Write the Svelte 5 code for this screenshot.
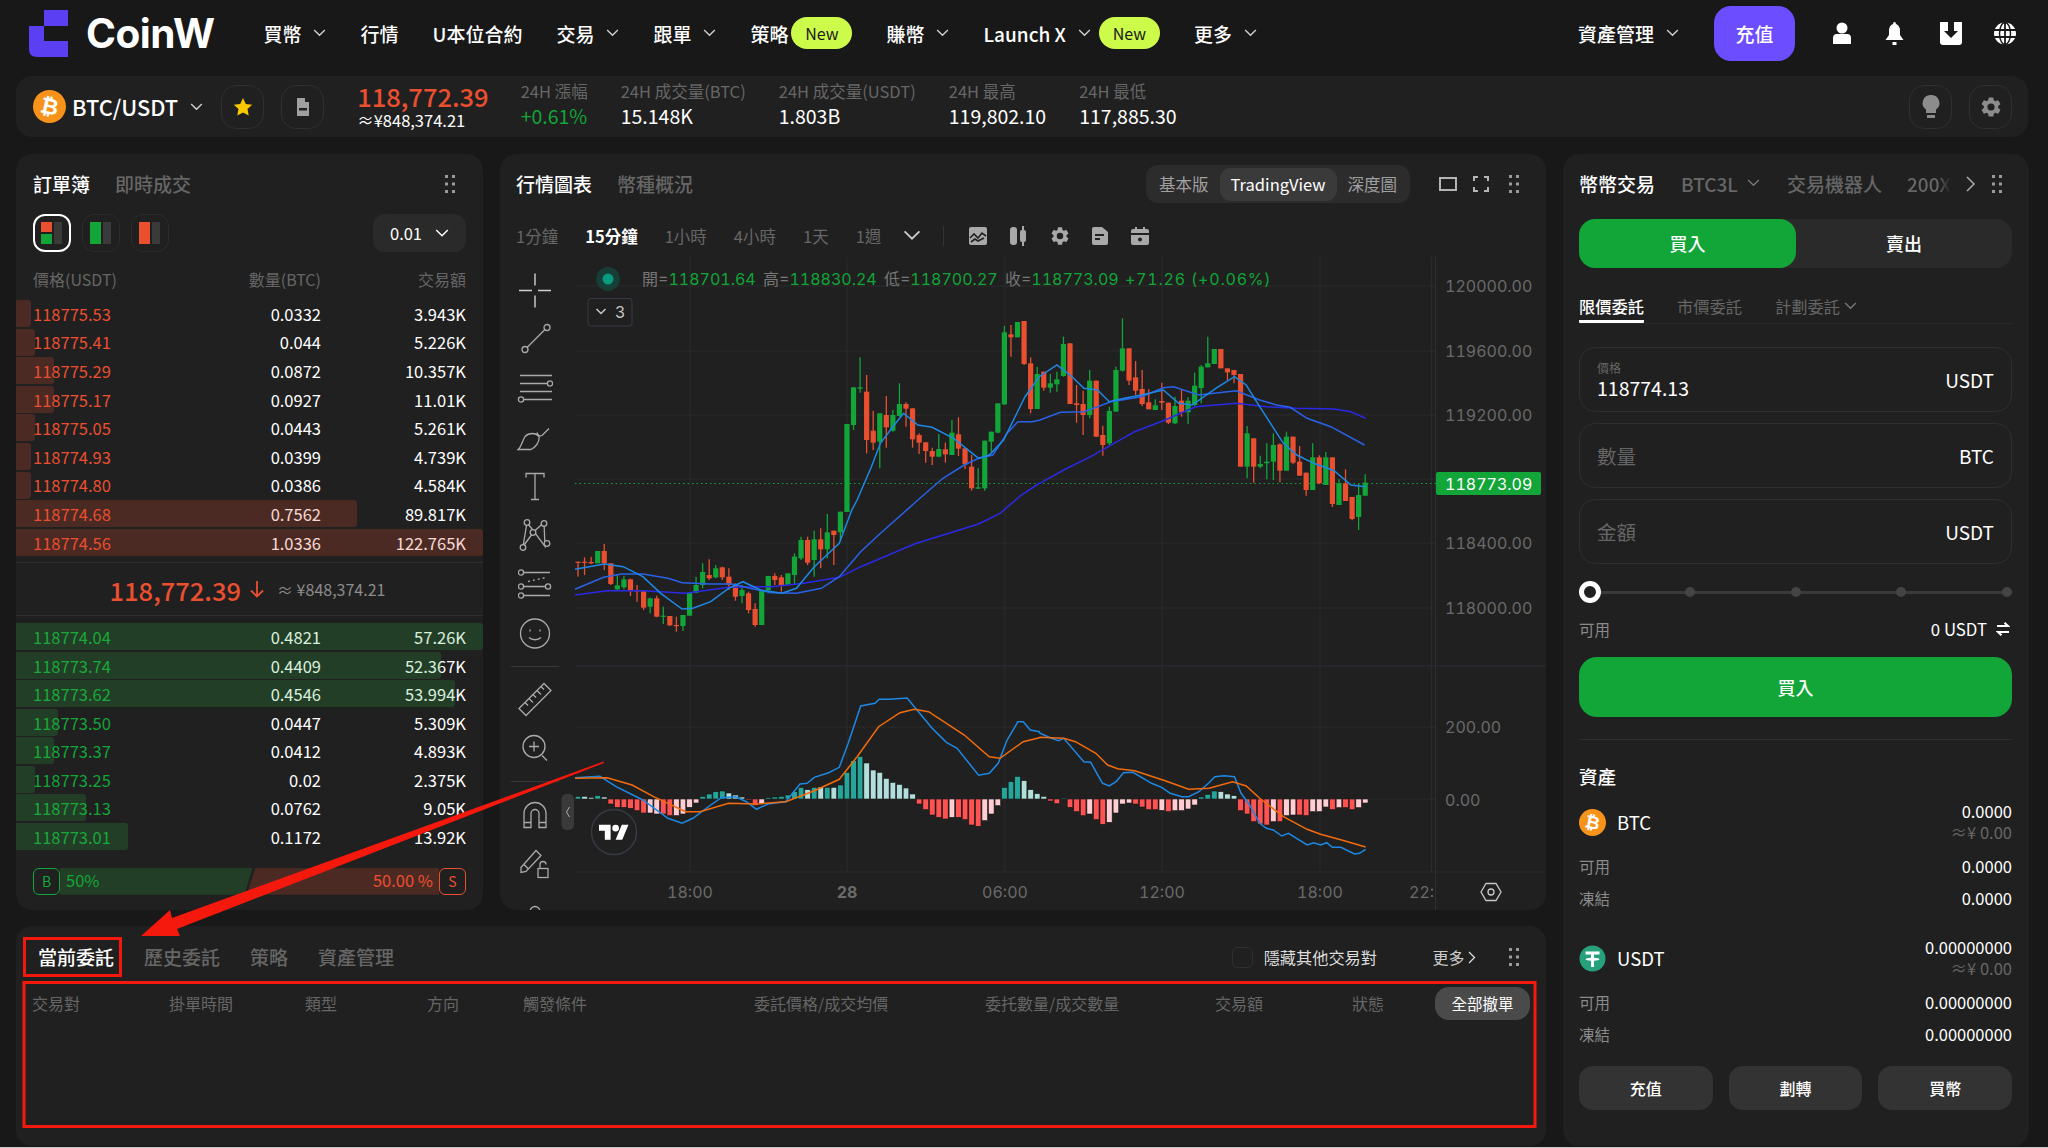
<script>
  const gear = "M19.14 12.94c.04-.3.06-.61.06-.94 0-.32-.02-.64-.07-.94l2.03-1.58a.49.49 0 0 0 .12-.61l-1.92-3.32a.49.49 0 0 0-.59-.22l-2.39.96c-.5-.38-1.03-.7-1.62-.94l-.36-2.54a.48.48 0 0 0-.48-.41h-3.84a.48.48 0 0 0-.47.41l-.36 2.54c-.59.24-1.13.57-1.62.94l-2.39-.96a.48.48 0 0 0-.59.22L2.74 8.87a.48.48 0 0 0 .12.61l2.03 1.58c-.05.3-.09.63-.09.94s.02.64.07.94l-2.03 1.58a.49.49 0 0 0-.12.61l1.92 3.32c.12.22.37.29.59.22l2.39-.96c.5.38 1.03.7 1.62.94l.36 2.54c.05.24.24.41.48.41h3.84c.24 0 .44-.17.47-.41l.36-2.54c.59-.24 1.13-.56 1.62-.94l2.39.96c.22.08.47 0 .59-.22l1.92-3.32a.48.48 0 0 0-.12-.61l-2.01-1.58zM12 15.6A3.6 3.6 0 1 1 12 8.4a3.6 3.6 0 0 1 0 7.2z";

  const stats = [
    { label: "24H 漲幅", value: "+0.61%", up: true },
    { label: "24H 成交量(BTC)", value: "15.148K" },
    { label: "24H 成交量(USDT)", value: "1.803B" },
    { label: "24H 最高", value: "119,802.10" },
    { label: "24H 最低", value: "117,885.30" }
  ];

  const asks = [
    ["118775.53", "0.0332", "3.943K", 15],
    ["118775.41", "0.044", "5.226K", 19],
    ["118775.29", "0.0872", "10.357K", 38],
    ["118775.17", "0.0927", "11.01K", 38],
    ["118775.05", "0.0443", "5.261K", 19],
    ["118774.93", "0.0399", "4.739K", 15],
    ["118774.80", "0.0386", "4.584K", 15],
    ["118774.68", "0.7562", "89.817K", 341],
    ["118774.56", "1.0336", "122.765K", 467]
  ];
  const bids = [
    ["118774.04", "0.4821", "57.26K", 467],
    ["118773.74", "0.4409", "52.367K", 425],
    ["118773.62", "0.4546", "53.994K", 439],
    ["118773.50", "0.0447", "5.309K", 42],
    ["118773.37", "0.0412", "4.893K", 38],
    ["118773.25", "0.02", "2.375K", 19],
    ["118773.13", "0.0762", "9.05K", 70],
    ["118773.01", "0.1172", "13.92K", 112]
  ];

  const frames = ["1分鐘", "15分鐘", "1小時", "4小時", "1天", "1週"];
  const columns = ["交易對", "掛單時間", "類型", "方向", "觸發條件", "委託價格/成交均價", "委托數量/成交數量", "交易額", "狀態"];

  // chart is traced in page pixels, x of bar i = 578 + 6.56 * i
  const barX = (i) => 578 + 6.56 * i;

  // [up, top, bottom, wickTop, wickBottom] in 3x crop units
  const lower = [
    [0,185,188,185,230],[0,185,188,172,225],[0,186,190,170,192],[1,153,190,153,190],[0,153,190,132,210],
    [0,190,252,190,255],[1,256,268,223,270],[1,238,262,228,268],[0,238,272,236,288],[0,270,274,255,305],
    [0,274,323,274,330],[1,295,320,293,340],[0,295,350,287,352],[1,347,350,320,372],[0,348,376,348,378],
    [0,375,378,350,395],[1,345,378,345,393],[1,277,347,277,347],[1,255,278,230,280],[1,216,255,190,265],
    [0,225,235,178,240],[1,205,232,195,235],[0,202,232,200,240],[0,230,255,205,270],[0,253,290,250,302],
    [1,270,288,255,310],[0,280,330,275,340],[0,327,375,310,380],[1,270,375,270,375],[1,228,270,228,280],
    [0,228,240,220,255],[0,232,255,225,275],[1,220,255,220,255],[1,170,225,160,255],[1,120,175,110,180],
    [0,120,188,110,195],[1,118,180,92,230],[0,118,148,85,205],[1,97,148,42,175],[0,92,105,92,195],
    [1,35,97,35,125]
  ].map(([u, a, b, c, d]) => [u, a + 1050, b + 1050, c + 1050, d + 1050]);
  const upper = [
    [1,822,1086,822,1086],[1,712,825,712,840],[1,712,716,622,728],[0,725,870,675,910],[0,842,878,782,900],
    [1,790,875,790,955],[0,795,832,738,893],[1,795,842,780,845],[1,762,798,700,800],[0,762,776,757,830],
    [0,775,868,775,893],[0,855,878,850,912],[0,877,903,877,938],[0,903,920,893,945],[1,897,920,852,922],
    [0,898,913,878,938],[1,848,915,810,915],[0,853,896,802,918],[0,895,943,895,957],[0,950,1015,915,1022],
    [1,1012,1016,955,1016],[1,872,1015,872,1022],[1,845,875,845,905],[1,760,848,760,850],[1,547,763,528,765],
    [0,553,562,525,620],[1,516,562,516,562],[0,513,642,513,645],[0,640,777,622,790],[1,672,777,650,777],
    [0,665,713,665,722],[1,700,713,672,728],[1,688,703,665,725],[1,582,678,560,680],[0,580,762,580,762],
    [0,760,765,705,818],[0,762,795,722,855],[1,692,795,660,805],[0,692,860,692,860],[0,855,885,827,917],
    [1,783,880,770,885],[1,660,785,650,785],[1,595,662,505,665],[0,595,692,595,705],[0,682,722,633,735],
    [0,717,762,660,768],[0,757,778,718,778],[1,766,780,748,780],[0,753,758,698,780],[0,758,818,758,822],
    [1,768,820,740,822],[0,752,787,718,800],[1,752,787,742,822],[1,707,765,668,768],[1,650,714,645,760],
    [1,640,652,560,652],[1,597,642,597,642],[0,597,655,597,655],[0,655,667,655,690],[0,660,675,660,700],
    [0,672,950,672,950],[1,850,950,828,985],[0,865,950,865,998],[1,942,950,917,955],[1,935,940,880,988],
    [1,885,935,850,990],[0,883,962,880,997],[1,860,962,845,962],[0,860,938,860,942],[0,935,977,888,977],
    [0,968,1020,968,1037],[1,922,1020,880,1020],[0,922,1000,916,1002],[1,922,1005,906,1005],[0,922,1062,922,1071],
    [1,1000,1065,988,1065],[0,1000,1053,958,1053],[0,1041,1107,1040,1111],[1,1035,1101,1000,1140],[1,998,1037,973,1037]
  ];
  const candles = [...lower, ...upper].map(([up, a, b, c, d], i) => ({
    x: barX(i), up,
    y: 150 + a / 3, h: Math.max((b - a) / 3, 1.2),
    wy1: 150 + c / 3, wy2: 150 + d / 3
  }));

  // histogram: positive up, negative down, colour code d/l = strong/soft
  const histData = [
    "d8","l8","l5","d10","l6","r-15","r-25","r-25","r-28","r-35","r-42","p-42","p-45","r-45","r-50","p-50","p-45","p-25","p-12",
    "d8","d15","d22","d24","l18","l12","l6","r-3","r-20","p-15","d4","d6","d8","d12","d22","d35","l28","d35","l36","d35","l35","d42",
    "d80","d115","d128","l108","l87","l80","l62","l50","l44","l33","l15","r-15","r-32","r-48","r-55","r-60","p-55","r-55","r-62","r-78","r-82",
    "p-65","p-45","p-20","d35","d52","d68","l55","l28","l16","l8","r-6","r-14","d3","r-25","r-38","r-50","p-45","r-62","r-76","p-70","p-42",
    "p-15","p-12","r-15","r-24","r-32","r-32","p-34","r-38","p-35","p-35","p-30","p-18","d6","d14","d24","l22","l15","l10","r-35","r-45","r-68",
    "r-75","r-78","p-68","r-68","p-50","p-48","r-48","r-50","p-38","p-38","p-24","r-32","p-26","r-26","r-32","p-26","p-12"
  ];
  const histFill = { d: "#26a69a", l: "#b2dfdb", r: "#ff5252", p: "#ffcdd2" };
  const bars = histData.map((s, i) => {
    const v = Number(s.slice(1)) / 3;
    return { x: barX(i) - 2.8, y: v > 0 ? 799 - v : 799, h: Math.abs(v), fill: histFill[s[0]] };
  });

  const p7 = (a) => a.map(([x, y]) => [500 + x / 2.8, 500 + y / 3]);
  const p5 = (a) => a.map(([x, y]) => [500 + x / 2.8, 150 + y / 3]);
  const p6 = (a) => a.map(([x, y]) => [1040 + x / 2.958, 150 + y / 3]);
  const p8 = (a) => a.map(([x, y]) => [1040 + x / 2.958, 500 + y / 3]);
  const line = (...parts) => parts.flat().map((p) => p[0].toFixed(1) + "," + p[1].toFixed(1)).join(" ");

  const ma5 = line(
    p7([[210,208],[293,192],[345,200],[400,230],[450,280],[510,327],[540,325],[590,305],[640,265],[680,245],[730,270],[790,280],[830,265],[880,200],[950,130],[985,30]]),
    p5([[1000,1050],[1040,950],[1065,880],[1100,830],[1130,790],[1170,825],[1210,832],[1270,865],[1340,925],[1370,915],[1410,870],[1470,740],[1510,680]]),
    p6([[50,645],[95,680],[130,715],[170,720],[205,755],[250,745],[300,735],[365,720],[410,760],[450,765],[520,715],[575,680],[610,705],[650,770],[720,880],[760,915],[810,940],[870,962],[920,1005],[963,1010]])
  );
  const ma10 = line(
    p7([[210,268],[290,232],[340,222],[400,222],[470,235],[510,248],[590,252],[650,252],[700,265],[760,278],[830,280],[900,265],[950,230],[1010,155],[1060,105]]),
    p5([[1170,1050],[1240,985],[1300,945],[1340,925],[1380,915],[1420,850],[1450,815],[1490,815]]),
    p6([[0,810],[60,787],[130,785],[210,755],[300,740],[365,713],[395,710],[470,735],[580,722],[650,750],[700,765],[740,772],[790,805],[860,830],[960,885]])
  );
  const ma30 = line(
    p7([[210,285],[300,272],[400,272],[520,280],[640,262],[760,260],[850,250],[950,232],[1010,200],[1060,178],[1160,132],[1340,72],[1400,40]]),
    p5([[1460,1035],[1510,1000]]),
    p6([[0,1000],[70,960],[150,920],[280,845],[370,810],[460,770],[580,760],[670,770],[760,775],[870,777],[920,785],[963,805]])
  );
  const dif = line(
    p7([[210,833],[280,829],[325,860],[400,900],[470,955],[510,970],[540,955],[590,915],[620,893],[660,890],[690,905],[718,928],[750,912],[800,905],[840,852],[860,850],[880,832],[920,818],[950,802],[975,730],[1010,618],[1050,610],[1062,598],[1090,598],[1140,594],[1210,685],[1250,727],[1280,745],[1340,826],[1370,820],[1395,790],[1420,720],[1450,665],[1465,665],[1485,690],[1510,695]]),
    p8([[0,700],[30,713],[55,722],[70,715],[130,785],[150,787],[185,850],[205,858],[225,845],[247,818],[275,817],[330,850],[360,862],[385,880],[420,890],[440,890],[470,875],[500,848],[517,830],[545,827],[575,830],[595,880],[620,915],[650,970],[670,985],[690,990],[715,1008],[735,1000],[790,1035],[810,1028],[830,1035],[848,1028],[865,1042],[890,1042],[930,1062],[945,1060],[963,1048]])
  );
  const dea = line(
    p7([[210,835],[300,833],[370,855],[430,890],[520,935],[560,935],[640,910],[720,912],[800,905],[880,872],[950,838],[1000,770],[1060,680],[1120,638],[1160,628],[1200,635],[1300,705],[1370,770],[1400,775],[1465,725],[1510,713]]),
    p8([[0,712],[70,715],[105,725],[165,760],[200,795],[230,806],[280,812],[370,842],[440,868],[500,865],[570,845],[610,858],[650,895],[720,950],[790,988],[830,1003],[900,1022],[963,1041]])
  );

  const hLines = [286, 351, 415, 479, 543, 608, 727, 799];
  const vLines = [690, 847, 1005, 1162, 1320];
  const prices = [[286, "120000.00"], [351, "119600.00"], [415, "119200.00"], [543, "118400.00"], [608, "118000.00"], [727, "200.00"], [800, "0.00"]];
  const times = [[690, "18:00"], [1005, "06:00"], [1162, "12:00"], [1320, "18:00"]];
</script>

{#snippet chev(size = 13, colour = "#d0d0d0")}
  <svg class="chev" width={size} height={size * 0.6} viewBox="0 0 13 8" fill="none" stroke={colour} stroke-width="1.4"><path d="M1 1l5.5 5.5L12 1" /></svg>
{/snippet}

{#snippet dots()}
  <svg class="dots" width="10" height="18" viewBox="0 0 10 18" fill="#9a9a9a">
    <rect x="0" y="0" width="3" height="3" /><rect x="7" y="0" width="3" height="3" />
    <rect x="0" y="7.5" width="3" height="3" /><rect x="7" y="7.5" width="3" height="3" />
    <rect x="0" y="15" width="3" height="3" /><rect x="7" y="15" width="3" height="3" />
  </svg>
{/snippet}

{#snippet btc(size)}
  <svg width={size} height={size} viewBox="0 0 33 33">
    <circle cx="16.5" cy="16.5" r="16.5" fill="#f7931a" />
    <text x="16.5" y="24" text-anchor="middle" class="btc-glyph" transform="rotate(12 16.5 16.5)">₿</text>
  </svg>
{/snippet}

{#snippet orderRow(row, side)}
  <div class="ob-row">
    <span class={side}>{row[0]}</span>
    <span class="num">{row[1]}</span>
    <span class="num">{row[2]}</span>
    <i class="depth {side}-depth" style="width:{row[3]}px"></i>
  </div>
{/snippet}

<div class="page">
  <header class="nav">
    <div class="logo">
      <svg width="39" height="47" viewBox="0 0 39 47" fill="#5b3ff2">
        <path d="M15 0h24v16H15zM0 16h15v15h24v16H8q-8 0-8-8z" />
      </svg>
      <span>CoinW</span>
    </div>
    <nav class="menu">
      <a>買幣 {@render chev()}</a>
      <a>行情</a>
      <a>U本位合約</a>
      <a>交易 {@render chev()}</a>
      <a>跟單 {@render chev()}</a>
      <a class="tight">策略 <b class="pill">New</b></a>
      <a>賺幣 {@render chev()}</a>
      <a>Launch X {@render chev()} <b class="pill">New</b></a>
      <a>更多 {@render chev()}</a>
    </nav>
    <div class="nav-right">
      <a class="asset-link">資產管理 {@render chev()}</a>
      <button class="deposit">充值</button>
      <svg class="nav-icon" width="20" height="23" viewBox="0 0 20 23" fill="#fff"><circle cx="10" cy="6" r="5.5" /><path d="M1 22v-6q0-4 4-4h10q4 0 4 4v6z" /></svg>
      <svg class="nav-icon" width="19" height="23" viewBox="0 0 19 23" fill="#fff"><path d="M9.5 0q1.5 0 1.5 2 4 1.5 4 7v4l3.5 5H.5L4 13V9q0-5.500 4-7 0-2 1.500-2zM7.500 20h4v3h-4z" /></svg>
      <svg class="nav-icon" width="22" height="23" viewBox="0 0 22 23"><path d="M0 0h22v20q0 3-3 3H3q-3 0-3-3z" fill="#fff" /><path d="M8 0h6v9h4l-7 7-7-7h4z" fill="#1a1a1a" /></svg>
      <svg class="nav-icon" width="22" height="23" viewBox="0 0 22 23"><circle cx="11" cy="11.500" r="11" fill="#fff" /><path d="M0 8h22M0 15h22M11 0v23" stroke="#1a1a1a" stroke-width="1.800" fill="none" /><ellipse cx="11" cy="11.500" rx="5.500" ry="11" fill="none" stroke="#1a1a1a" stroke-width="1.500" /></svg>
    </div>
  </header>

  <section class="ticker">
    <div class="pair">
      {@render btc(33)}
      <span>BTC/USDT</span>
      {@render chev()}
    </div>
    <button class="round-btn star">
      <svg width="20" height="20" viewBox="0 0 20 20" fill="#f9c900"><path d="M10 1l2.800 5.900 6.400.800-4.700 4.400 1.200 6.400L10 15.400l-5.700 3.100 1.200-6.400L.8 7.700l6.400-.8z" /></svg>
    </button>
    <button class="round-btn">
      <svg width="14" height="20" viewBox="0 0 14 20" fill="#a0a0a0"><path d="M1 1h8v4h4v14H1z" /><rect x="3" y="11" width="8" height="2.500" fill="#222" /></svg>
    </button>
    <div class="last-price">
      <strong>118,772.39</strong>
      <span>≈¥848,374.21</span>
    </div>
    {#each stats as s}
      <div class="stat">
        <span>{s.label}</span>
        <strong class:green={s.up}>{s.value}</strong>
      </div>
    {/each}
    <div class="ticker-right">
      <button class="round-btn">
        <svg width="20" height="24" viewBox="0 0 20 24" fill="#8c8c8c"><path d="M10 0a8 8 0 0 1 5 14.500V18H5v-3.500A8 8 0 0 1 10 0zM6 20h8v3H6z" /></svg>
      </button>
      <button class="round-btn">
        <svg width="24" height="24" viewBox="0 0 24 24" fill="#8c8c8c" fill-rule="evenodd"><path d={gear} /></svg>
      </button>
    </div>
  </section>

  <main class="workspace">
    <section class="panel book">
      <div class="panel-head">
        <span class="tab on">訂單簿</span>
        <span class="tab">即時成交</span>
        <span class="spacer"></span>
        {@render dots()}
      </div>
      <div class="book-tools">
        <button class="layout active">
          <svg width="22" height="22" viewBox="0 0 22 22"><rect x="0" y="0" width="11" height="10" fill="#ea4f30" /><rect x="0" y="12" width="11" height="10" fill="#12a538" /><rect x="13" y="0" width="8" height="22" fill="#3a3a3a" /></svg>
        </button>
        <button class="layout">
          <svg width="22" height="22" viewBox="0 0 22 22"><rect x="0" y="0" width="11" height="22" fill="#12a538" /><rect x="13" y="0" width="8" height="22" fill="#3a3a3a" /></svg>
        </button>
        <button class="layout">
          <svg width="22" height="22" viewBox="0 0 22 22"><rect x="0" y="0" width="11" height="22" fill="#ea4f30" /><rect x="13" y="0" width="8" height="22" fill="#3a3a3a" /></svg>
        </button>
        <button class="precision">0.01 {@render chev(14, "#fff")}</button>
      </div>
      <div class="ob-head">
        <span>價格(USDT)</span><span class="num">數量(BTC)</span><span class="num">交易額</span>
      </div>
      {#each asks as row}
        {@render orderRow(row, "red")}
      {/each}
      <div class="mid">
        <strong>118,772.39</strong>
        <svg width="14" height="17" viewBox="0 0 14 17" fill="none" stroke="#ea4f30" stroke-width="1.800"><path d="M7 0v15M1 9.500l6 6 6-6" /></svg>
        <span>≈ ¥848,374.21</span>
      </div>
      <div class="bids">
        {#each bids as row}
          {@render orderRow(row, "green")}
        {/each}
      </div>
      <div class="ratio">
        <span class="side-box b">B</span>
        <div class="fill buy-fill">50%</div>
        <div class="fill sell-fill">50.00 %</div>
        <span class="side-box s">S</span>
      </div>
    </section>

    <section class="panel chart-panel">
      <div class="panel-head chart-head">
        <span class="tab on">行情圖表</span>
        <span class="tab">幣種概況</span>
        <span class="spacer"></span>
        <div class="segment">
          <span>基本版</span><span class="seg-on">TradingView</span><span>深度圖</span>
        </div>
        <div class="chart-actions">
          <svg width="18" height="14" viewBox="0 0 18 14" fill="none" stroke="#b5b5b5" stroke-width="2"><rect x="1" y="1" width="16" height="12" /></svg>
          <svg width="16" height="16" viewBox="0 0 16 16" fill="none" stroke="#b5b5b5" stroke-width="2"><path d="M1 5V1h4M11 1h4v4M15 11v4h-4M5 15H1v-4" /></svg>
          {@render dots()}
        </div>
      </div>
      <div class="frames">
        {#each frames as f}
          <span class:on={f === "15分鐘"}>{f}</span>
        {/each}
        {@render chev(18, "#c8c8c8")}
        <i class="frame-div"></i>
        <div class="frame-icons">
          <svg width="18" height="18" viewBox="0 0 18 18"><rect width="18" height="18" rx="2" fill="#a9a9a9" /><path d="M1 11l4-4 4 4 4-5 4 3M2 15l4-3 3 2 6-3" fill="none" stroke="#222" stroke-width="1.600" /></svg>
          <svg width="18" height="20" viewBox="0 0 18 20" fill="#a9a9a9"><rect x="0" y="1" width="7" height="18" rx="3" /><rect x="10" y="4" width="6" height="12" rx="2" /><rect x="12" y="0" width="2" height="20" /></svg>
          <svg width="18" height="18" viewBox="2 2 20 20" fill="#a9a9a9" fill-rule="evenodd"><path d={gear} /></svg>
          <svg width="16" height="18" viewBox="0 0 16 18" fill="#a9a9a9"><path d="M2 0h8l6 5v11q0 2-2 2H2q-2 0-2-2V2q0-2 2-2z" /><rect x="3" y="7" width="9" height="2" fill="#222" /><rect x="3" y="11" width="5" height="2" fill="#222" /></svg>
          <svg width="18" height="18" viewBox="0 0 18 18" fill="#a9a9a9"><path d="M2 2h2V0h2v2h6V0h2v2h2q2 0 2 2v2H0V4q0-2 2-2zM0 8h18v8q0 2-2 2H2q-2 0-2-2z" /><circle cx="9" cy="12.500" r="2" fill="#222" /></svg>
        </div>
      </div>
      <div class="chart-body">
        <div class="tools">
          <svg width="32" height="34" viewBox="0 0 32 34" stroke="#d0d0d0" stroke-width="1.400" fill="none"><path d="M0 17h13M19 17h13M16 0v12M16 22v12" /></svg>
          <svg width="32" height="32" viewBox="0 0 32 32" stroke="#aaa" stroke-width="1.300" fill="none"><circle cx="6" cy="26" r="3" /><circle cx="28" cy="4" r="3" /><path d="M8 24L26 6" /></svg>
          <svg width="36" height="32" viewBox="0 0 36 32" stroke="#aaa" stroke-width="1.300" fill="none"><path d="M3 3h32M3 11h28M3 19h32M7 27h28" /><circle cx="33" cy="11" r="2.600" /><circle cx="4" cy="27" r="2.600" /></svg>
          <svg width="36" height="26" viewBox="0 0 36 26" stroke="#aaa" stroke-width="1.300" fill="none"><path d="M1 25c3-2 4-8 7-13 4-4 11-4 14 0 1 6-4 11-8 13zM20 8c1 3 3 4 5 3l7-7" /></svg>
          <svg width="20" height="28" viewBox="0 0 20 28" stroke="#aaa" stroke-width="1.300" fill="none"><path d="M1 5V1h18v4M10 1v26M6 27h8" /></svg>
          <svg width="34" height="32" viewBox="0 0 34 32" stroke="#aaa" stroke-width="1.300" fill="#202020"><path d="M9 3L5 27 16 12 27 27 26 3 16 12 9 3M5 27l11-15" fill="none" /><circle cx="9" cy="3" r="2.800" /><circle cx="26" cy="4" r="2.800" /><circle cx="5" cy="28" r="2.800" /><circle cx="29" cy="24" r="2.800" /><circle cx="15" cy="13" r="2.800" /></svg>
          <svg width="34" height="30" viewBox="0 0 34 30" stroke="#aaa" stroke-width="1.300" fill="none"><path d="M6 3h26M6 17h22M6 26h26" /><path d="M10 12l18-4" stroke-dasharray="2 3" /><circle cx="3" cy="3" r="2.600" /><circle cx="3" cy="17" r="2.600" /><circle cx="30" cy="17" r="2.600" /><circle cx="3" cy="26" r="2.600" /></svg>
          <svg width="32" height="32" viewBox="0 0 32 32" stroke="#aaa" stroke-width="1.300" fill="none"><circle cx="16" cy="16" r="14.500" /><path d="M10 20c3 3 9 3 12 0" /><path d="M11 12v2M21 12v2" /></svg>
          <i class="tool-div"></i>
          <svg width="34" height="34" viewBox="0 0 34 34" stroke="#aaa" stroke-width="1.300" fill="none"><path d="M1 26L26 1l7 7-25 25zM7 20l3 3M11 16l4 4M15 12l3 3M19 8l4 4M23 4l3 3" /></svg>
          <svg width="26" height="28" viewBox="0 0 26 28" stroke="#aaa" stroke-width="1.300" fill="none"><circle cx="12" cy="12" r="11" /><path d="M7 12h10M12 7v10M20 21l5 5" /></svg>
          <i class="tool-div"></i>
          <svg width="24" height="28" viewBox="0 0 24 28" stroke="#aaa" stroke-width="1.300" fill="none"><path d="M1 27V13a11 11 0 0 1 22 0v14h-7V13a4 4 0 0 0-8 0v14zM1 22h7M16 22h7" /></svg>
          <svg width="30" height="32" viewBox="0 0 30 32" stroke="#aaa" stroke-width="1.300" fill="none"><path d="M1 20L16 3l5 5L6 24l-5 1zM4 17l4 4" /><rect x="18" y="21" width="10" height="9" fill="#202020" /><path d="M20 21v-4a3 3 0 0 1 6 0" /></svg>
          <svg width="14" height="18" viewBox="0 0 14 18" stroke="#aaa" stroke-width="1.300" fill="none"><path d="M2 14V8a5 5 0 0 1 10 0" /></svg>
        </div>

        <svg class="chart" width="976" height="653" viewBox="570 257 976 653">
          {#each hLines as y}
            <line x1="575" x2="1435" y1={y} y2={y} stroke="#2b2b2b" />
          {/each}
          {#each vLines as x}
            <line x1={x} x2={x} y1="257" y2="872" stroke="#2b2b2b" />
          {/each}
          <line x1="575" x2="1546" y1="666" y2="666" stroke="#2a2e39" />
          <line x1="575" x2="1546" y1="872" y2="872" stroke="#2b2b2b" />
          <line x1="1431.500" x2="1431.500" y1="257" y2="872" stroke="#2b2b2b" />
          <line x1="1435.500" x2="1435.500" y1="257" y2="910" stroke="#2e2e2e" />

          <line x1="575" x2="1436" y1="483.500" y2="483.500" stroke="#12a538" stroke-width="1.200" stroke-dasharray="1.500 3" />

          {#each candles as c}
            <line x1={c.x} x2={c.x} y1={c.wy1} y2={c.wy2} stroke={c.up ? "#12a538" : "#ea4f30"} stroke-width="1.300" />
            <rect x={c.x - 2.600} y={c.y} width="5.200" height={c.h} fill={c.up ? "#12a538" : "#ea4f30"} />
          {/each}

          <polyline points={ma30} fill="none" stroke="#2a2ae6" stroke-width="1.500" />
          <polyline points={ma10} fill="none" stroke="#2962e8" stroke-width="1.500" />
          <polyline points={ma5} fill="none" stroke="#1e88e5" stroke-width="1.500" />

          {#each bars as b}
            <rect x={b.x} y={b.y} width="5.600" height={b.h} fill={b.fill} stroke="#151515" stroke-width="0.600" />
          {/each}
          <polyline points={dif} fill="none" stroke="#1e88e5" stroke-width="1.500" />
          <polyline points={dea} fill="none" stroke="#f26c0d" stroke-width="1.500" />

          <circle cx="608" cy="279" r="12" fill="#0e5a4e" opacity="0.5" />
          <circle cx="608" cy="279" r="5.500" fill="#089981" />
          <text class="legend" x="642" y="285">
            <tspan fill="#777">開=</tspan><tspan>118701.64</tspan>
            <tspan fill="#777" dx="3">高=</tspan><tspan>118830.24</tspan>
            <tspan fill="#777" dx="3">低=</tspan><tspan>118700.27</tspan>
            <tspan fill="#777" dx="3">收=</tspan><tspan>118773.09</tspan>
            <tspan dx="2" class="legend-change">+71.26 (+0.06%)</tspan>
          </text>
          <rect x="588" y="298.500" width="44" height="27.500" rx="3" fill="none" stroke="#363a45" />
          <path d="M596.500 309l4.500 4.500 4.500-4.500" fill="none" stroke="#c8c8c8" stroke-width="1.500" />
          <text class="legend-num" x="615" y="318">3</text>

          {#each prices as p}
            <text class="axis" x="1445" y={p[0] + 6}>{p[1]}</text>
          {/each}
          <rect x="1436" y="472" width="105" height="23" rx="2" fill="#12a538" />
          <text class="axis tag" x="1445" y="489.500">118773.09</text>

          {#each times as t}
            <text class="axis" x={t[0]} y="898" text-anchor="middle">{t[1]}</text>
          {/each}
          <text class="axis bold" x="847" y="898" text-anchor="middle">28</text>
          <text class="axis" x="1409" y="898">22:</text>
          <path d="M1481 892l5-8.500h10l5 8.500-5 8.500h-10z" fill="none" stroke="#c8c8c8" stroke-width="1.300" />
          <circle cx="1491" cy="892" r="3" fill="none" stroke="#c8c8c8" stroke-width="1.300" />

          <rect x="561.500" y="794" width="12.500" height="36" rx="5" fill="#3a3a3a" />
          <path d="M569.500 807l-3 5 3 5" fill="none" stroke="#aaa" />
          <circle cx="614" cy="832" r="22.500" fill="#202020" stroke="#363a45" stroke-width="1.500" />
          <g transform="translate(599 821.500) scale(0.83)" fill="#fff">
            <path d="M14 22H7V11H0V4h14v18zM28 22h-8l7.500-18h8L28 22z" /><circle cx="20" cy="8" r="4" />
          </g>
        </svg>
      </div>
    </section>

    <aside class="panel trade">
      <div class="panel-head trade-head">
        <span class="tab on">幣幣交易</span>
        <span class="tab">BTC3L {@render chev(13, "#777")}</span>
        <span class="tab">交易機器人</span>
        <span class="tab fade">200X</span>
        <svg width="10" height="16" viewBox="0 0 10 16" fill="none" stroke="#aaa" stroke-width="1.500"><path d="M1 1l7 7-7 7" /></svg>
        {@render dots()}
      </div>
      <div class="side-toggle">
        <span class="buy-on">買入</span>
        <span>賣出</span>
      </div>
      <div class="sub-tabs">
        <span class="on">限價委託</span>
        <span>市價委託</span>
        <span>計劃委託 {@render chev(13, "#777")}</span>
      </div>
      <div class="field">
        <div>
          <small>價格</small>
          <b>118774.13</b>
        </div>
        <span>USDT</span>
      </div>
      <div class="field">
        <em>數量</em><span>BTC</span>
      </div>
      <div class="field">
        <em>金額</em><span>USDT</span>
      </div>
      <div class="slider">
        <i></i><i></i><i></i><i></i><i></i>
        <u></u>
      </div>
      <div class="avail">
        <span>可用</span>
        <span class="avail-val">0 USDT
          <svg width="14" height="14" viewBox="0 0 14 14" fill="none" stroke="#fff" stroke-width="2"><path d="M1 4h11L8.500 .8M13 10H2l3.500 3.200" /></svg>
        </span>
      </div>
      <button class="buy-btn">買入</button>
      <hr />
      <h3>資產</h3>

      <div class="coin">
        {@render btc(27)}
        <span class="coin-name">BTC</span>
        <div class="coin-vals"><span>0.0000</span><small>≈¥ 0.00</small></div>
      </div>
      <div class="kv"><span>可用</span><span>0.0000</span></div>
      <div class="kv"><span>凍結</span><span>0.0000</span></div>

      <div class="coin usdt">
        <svg width="27" height="27" viewBox="0 0 27 27">
          <circle cx="13.500" cy="13.500" r="13" fill="#26a17b" />
          <path d="M6.500 6.500h14v3h-5.500v3.200c3 .2 5.500.8 5.500 1.500s-2.500 1.300-5.500 1.500V22h-3v-6.300c-3-.2-5.500-.8-5.500-1.500s2.500-1.300 5.500-1.500V9.500H6.500z" fill="#fff" />
        </svg>
        <span class="coin-name">USDT</span>
        <div class="coin-vals"><span>0.00000000</span><small>≈¥ 0.00</small></div>
      </div>
      <div class="kv"><span>可用</span><span>0.00000000</span></div>
      <div class="kv"><span>凍結</span><span>0.00000000</span></div>

      <div class="actions">
        <button>充值</button><button>劃轉</button><button>買幣</button>
      </div>
    </aside>

    <section class="panel orders">
      <div class="panel-head orders-head">
        <span class="tab on">當前委託</span>
        <span class="tab">歷史委託</span>
        <span class="tab">策略</span>
        <span class="tab">資產管理</span>
        <span class="spacer"></span>
        <i class="check"></i>
        <span class="hide-label">隱藏其他交易對</span>
        <span class="more">更多
          <svg width="8" height="13" viewBox="0 0 8 13" fill="none" stroke="#ddd" stroke-width="1.300"><path d="M1 1l5.500 5.500L1 12" /></svg>
        </span>
        {@render dots()}
      </div>
      <div class="orders-cols">
        {#each columns as c}
          <span>{c}</span>
        {/each}
        <button>全部撤單</button>
      </div>
    </section>
  </main>
  <div class="edge"></div>

  <!-- red markup drawn on top of the screenshot -->
  <svg class="markup" width="2048" height="1148" viewBox="0 0 2048 1148">
    <rect x="24.500" y="938.500" width="96" height="37" fill="none" stroke="#f5180c" stroke-width="3" />
    <rect x="24" y="982.500" width="1511" height="144" fill="none" stroke="#f5180c" stroke-width="3" />
    <path d="M603.500 761.500L172 918l-2-8-29 26h39l-3-7L604 763z" fill="#f5180c" />
  </svg>
</div>

<style>
  :global(body) {
    margin: 0;
    background: #181818;
  }

  .page {
    position: relative;
    width: 2048px;
    height: 1148px;
    overflow: hidden;
    background: #181818;
    color: #fff;
    font-family: "Noto Sans CJK TC", "Noto Sans", sans-serif;
  }

  button {
    font-family: inherit;
    border: none;
    color: inherit;
    padding: 0;
  }

  /* top nav */
  .nav {
    height: 66px;
    display: flex;
    align-items: center;
    padding: 0 32px 0 29px;
  }

  .logo {
    display: flex;
    align-items: center;
    gap: 18px;
    margin-right: 49px;
  }

  .logo span {
    font-family: Inter, sans-serif;
    font-weight: 700;
    font-size: 40.500px;
    letter-spacing: -0.5px;
  }

  .menu {
    display: flex;
    align-items: center;
    gap: 34px;
  }

  .menu a,
  .asset-link {
    display: flex;
    align-items: center;
    gap: 12px;
    font-size: 19px;
    font-weight: 500;
    white-space: nowrap;
  }

  .menu a.tight {
    gap: 3px;
  }

  .pill {
    display: inline-flex;
    align-items: center;
    justify-content: center;
    width: 61px;
    height: 32px;
    margin-left: -4px;
    border-radius: 16px;
    background: #cdfb4a;
    color: #1a1a1a;
    font-weight: 400;
    font-size: 16px;
  }

  .tight .pill {
    margin-left: 0;
  }

  .nav-right {
    margin-left: auto;
    display: flex;
    align-items: center;
  }

  .deposit {
    width: 81px;
    height: 55px;
    margin: 0 37px 0 35px;
    border-radius: 17px;
    background: #6c4dff;
    font-size: 19px;
    font-weight: 500;
  }

  .nav-icon {
    margin-right: 33px;
  }

  .nav-icon:nth-of-type(2) {
    margin-right: 36px;
  }

  .nav-icon:nth-of-type(3) {
    margin-right: 32px;
  }

  .nav-icon:last-child {
    margin-right: 0;
  }

  /* ticker */
  .ticker {
    height: 61px;
    margin: 10px 20px 17px 16px;
    padding: 0 16px 0 17px;
    display: flex;
    align-items: center;
    background: #202020;
    border-radius: 16px;
  }

  .pair {
    display: flex;
    align-items: center;
    gap: 6px;
    margin-right: 18px;
    font-size: 21.800px;
    font-weight: 500;
  }

  .pair .chev {
    margin-left: 6px;
  }

  .round-btn {
    width: 43px;
    height: 44px;
    display: flex;
    align-items: center;
    justify-content: center;
    margin-right: 17px;
    background: transparent;
    border: 1.5px solid #2f2f2f;
    border-radius: 15px;
  }

  .last-price {
    display: flex;
    flex-direction: column;
    margin: 0 32px 0 16px;
    padding-bottom: 2px;
    line-height: 1;
  }

  .last-price strong {
    color: #ea4f30;
    font-size: 25.500px;
    font-weight: 500;
  }

  .last-price span {
    margin-top: 3px;
    font-size: 16.500px;
  }

  .stat {
    display: flex;
    flex-direction: column;
    gap: 6px;
    margin-right: 33px;
    padding-bottom: 5px;
    line-height: 1;
  }

  .stat span {
    font-size: 16.5px;
    color: #666;
  }

  .stat strong {
    font-size: 19.5px;
    font-weight: 400;
  }

  .stat strong.green {
    color: #12a538;
  }

  .ticker-right {
    margin-left: auto;
    display: flex;
  }

  .ticker-right .round-btn:last-child {
    margin-right: 0;
  }

  /* workspace */
  .workspace {
    display: grid;
    grid-template-columns: 467px 1046px 466px;
    grid-template-rows: 756px 220px;
    column-gap: 17px;
    row-gap: 16px;
    padding-left: 16px;
  }

  .panel {
    background: #202020;
    border-radius: 16px;
    overflow: hidden;
    min-width: 0;
  }

  .panel-head {
    height: 60px;
    display: flex;
    align-items: center;
    padding: 0 28px 0 17px;
    gap: 25px;
  }

  .tab {
    display: inline-flex;
    align-items: center;
    gap: 9px;
    padding-bottom: 2px;
    font-size: 19px;
    font-weight: 500;
    color: #666;
    white-space: nowrap;
  }

  .tab.on {
    color: #fff;
  }

  .spacer {
    flex: 1;
  }

  /* order book */
  .book {
    grid-column: 1;
    grid-row: 1;
  }

  .book-tools {
    display: flex;
    align-items: center;
    gap: 11px;
    padding: 0 17px;
  }

  .layout {
    width: 38px;
    height: 38px;
    display: flex;
    align-items: center;
    justify-content: center;
    background: transparent;
    border: 1.5px solid #2c2c2c;
    border-radius: 12px;
  }

  .layout.active {
    border: 2px solid #fff;
  }

  .precision {
    margin-left: auto;
    width: 93px;
    height: 38px;
    display: flex;
    align-items: center;
    justify-content: center;
    gap: 13px;
    background: #2a2a2a;
    border-radius: 12px;
    font-size: 16.5px;
  }

  .ob-head,
  .ob-row {
    display: grid;
    grid-template-columns: 1fr 145px 145px;
    padding: 0 17px;
    font-size: 16.5px;
  }

  .ob-head {
    height: 48px;
    padding-top: 6px;
    box-sizing: border-box;
    align-items: center;
    font-size: 16px;
    color: #666;
  }

  .ob-row {
    position: relative;
    height: 28.6px;
    align-items: center;
    line-height: 27px;
  }

  .num {
    text-align: right;
  }

  .red {
    color: #ea4f30;
  }

  .green {
    color: #12a538;
  }

  .depth {
    position: absolute;
    left: 0;
    top: 0;
    height: 27px;
    border-radius: 0 3px 3px 0;
  }

  .red-depth {
    background: rgba(234, 79, 48, 0.22);
  }

  .green-depth {
    background: rgba(52, 187, 72, 0.2);
  }

  .mid {
    height: 52px;
    margin-top: 5px;
    display: flex;
    align-items: center;
    justify-content: center;
    border-top: 1px solid #2e2e2e;
    border-bottom: 1px solid #2e2e2e;
    padding-right: 4px;
  }

  .mid strong {
    font-size: 25.500px;
    font-weight: 500;
    color: #ea4f30;
    margin-right: 9px;
  }

  .mid span {
    margin-left: 13px;
    font-size: 16px;
    color: #8c8c8c;
  }

  .bids {
    margin-top: 7px;
  }

  .bids .ob-row {
    height: 28.5px;
  }

  .ratio {
    height: 28px;
    margin-top: 16px;
    padding: 0 17px;
    display: flex;
    align-items: center;
  }

  .side-box {
    width: 27px;
    height: 27px;
    flex: none;
    display: flex;
    align-items: center;
    justify-content: center;
    box-sizing: border-box;
    border-radius: 6px;
    font-size: 14px;
  }

  .side-box.b {
    border: 1.5px solid #12a538;
    color: #12a538;
  }

  .side-box.s {
    border: 1.5px solid #ea4f30;
    color: #ea4f30;
  }

  .fill {
    height: 27px;
    flex: 1;
    display: flex;
    align-items: center;
    box-sizing: border-box;
    padding-bottom: 2px;
    font-size: 16.5px;
  }

  .buy-fill {
    padding-left: 6px;
    margin-right: -6px;
    color: #12a538;
    background: rgba(52, 187, 72, 0.2);
    clip-path: polygon(0 0, 100% 0, calc(100% - 8px) 100%, 0 100%);
  }

  .sell-fill {
    justify-content: flex-end;
    padding-right: 6px;
    color: #ea4f30;
    background: rgba(234, 79, 48, 0.22);
    clip-path: polygon(9px 0, 100% 0, 100% 100%, 0 100%);
  }

  /* chart */
  .chart-panel {
    grid-column: 2;
    grid-row: 1;
    position: relative;
  }

  .chart-head {
    height: 60px;
    padding: 0 27px 2px 16px;
  }

  .segment {
    display: flex;
    align-items: center;
    height: 38px;
    padding: 0 2px;
    background: #2c2c2c;
    border-radius: 12px;
    font-size: 16.500px;
    color: #a0a0a0;
  }

  .segment span {
    padding: 0 11px;
    line-height: 33px;
    border-radius: 11px;
  }

  .segment .seg-on {
    background: #3a3a3a;
    color: #fff;
  }

  .chart-actions {
    display: flex;
    align-items: center;
    gap: 16px;
    margin-left: 4px;
  }

  .chart-actions .dots {
    margin-left: 4px;
  }

  .frames {
    height: 41px;
    padding: 0 0 2px 16px;
    box-sizing: border-box;
    display: flex;
    align-items: center;
    gap: 27px;
    font-size: 16.5px;
    color: #666;
  }

  .frames span.on {
    color: #fff;
    font-weight: 700;
  }

  .frames > .chev {
    margin-left: -5px;
  }

  .frame-div {
    width: 1px;
    height: 20px;
    background: #333;
    margin-left: -5px;
  }

  .frame-icons {
    display: flex;
    align-items: center;
    gap: 23px;
    margin-left: -2px;
  }

  .chart-body {
    display: flex;
    height: 653px;
  }

  .tools {
    width: 70px;
    flex: none;
    padding-top: 9px;
    box-sizing: border-box;
    display: grid;
    grid-auto-rows: auto;
    justify-items: center;
    align-items: center;
    height: 653px;
    overflow: hidden;
    align-content: start;
  }

  .tools svg {
    height: 49px;
    box-sizing: content-box;
  }

  .tool-div {
    width: 48px;
    height: 1px;
    background: #36363c;
    margin: 8px 0;
  }

  .chart {
    display: block;
    flex: none;
    overflow: visible;
  }

  .chart text {
    font-family: Inter, "Noto Sans CJK TC", sans-serif;
    font-variant-numeric: tabular-nums;
  }

  .legend {
    font-size: 16px;
    fill: #12a538;
  }

  .legend-change {
    letter-spacing: 0.8px;
  }

  .legend-num {
    font-size: 16px;
    fill: #c8c8c8;
  }

  .axis {
    font-size: 16px;
    fill: #6a6a6a;
  }

  .axis.tag {
    fill: #fff;
  }

  .axis.bold {
    font-weight: 700;
  }

  .btc-glyph {
    font-family: "DejaVu Sans", sans-serif;
    font-weight: 700;
    font-size: 22px;
    fill: #fff;
  }

  /* trade form */
  .trade {
    grid-column: 3;
    grid-row: 1 / span 2;
    padding: 0 17px 0 16px;
  }

  .trade-head {
    padding: 0;
    gap: 0;
  }

  .trade-head .tab:nth-child(2) {
    margin-left: 26px;
  }

  .trade-head .tab:nth-child(3) {
    margin-left: 27px;
  }

  .trade-head .tab.fade {
    margin-left: 25px;
    margin-right: 15px;
    -webkit-mask-image: linear-gradient(90deg, #000 70%, transparent);
    mask-image: linear-gradient(90deg, #000 70%, transparent);
  }

  .trade-head .dots {
    margin-left: 16px;
  }

  .side-toggle {
    height: 49px;
    margin-top: 5px;
    display: grid;
    grid-template-columns: 217px 1fr;
    align-items: center;
    text-align: center;
    background: #2a2a2a;
    border-radius: 16px;
    font-size: 18px;
    font-weight: 500;
  }

  .side-toggle span {
    line-height: 49px;
  }

  .buy-on {
    background: #12a538;
    border-radius: 16px;
  }

  .sub-tabs {
    height: 32px;
    margin-top: 24px;
    display: flex;
    gap: 33px;
    box-sizing: border-box;
    border-bottom: 1px solid #2a2a2a;
    font-size: 16.250px;
    color: #666;
    line-height: 28px;
  }

  .sub-tabs span {
    display: flex;
    align-items: center;
    gap: 4px;
    height: 31px;
    padding-bottom: 3px;
    box-sizing: border-box;
  }

  .sub-tabs .on {
    color: #fff;
    font-weight: 500;
    padding-bottom: 0;
    border-bottom: 3px solid #fff;
    border-radius: 1px;
  }

  .field {
    height: 65px;
    margin-top: 11px;
    padding: 0 17px;
    box-sizing: border-box;
    display: flex;
    align-items: center;
    justify-content: space-between;
    border: 1.500px solid #2e2e2e;
    border-radius: 16px;
    font-size: 19px;
  }

  .sub-tabs + .field {
    margin-top: 23px;
  }

  .field small {
    display: block;
    margin-top: 2px;
    font-size: 12px;
    line-height: 14px;
    color: #666;
  }

  .field b {
    display: block;
    font-weight: 400;
    font-size: 19.500px;
    line-height: 26px;
  }

  .field em {
    font-style: normal;
    color: #666;
    font-size: 19.500px;
  }

  .slider {
    position: relative;
    height: 22px;
    margin-top: 17px;
    display: flex;
    align-items: center;
    justify-content: space-between;
  }

  .slider::before {
    content: "";
    position: absolute;
    left: 0;
    right: 0;
    height: 3px;
    background: #3a3a3a;
  }

  .slider i {
    position: relative;
    width: 10px;
    height: 10px;
    border-radius: 50%;
    background: #444;
  }

  .slider u {
    position: absolute;
    left: 0;
    top: 0;
    width: 22px;
    height: 22px;
    box-sizing: border-box;
    border: 5px solid #fff;
    border-radius: 50%;
    background: #202020;
  }

  .avail {
    height: 20px;
    margin-top: 16px;
    margin-bottom: 2px;
    display: flex;
    align-items: center;
    justify-content: space-between;
    font-size: 15.500px;
    color: #8a8a8a;
  }

  .avail-val {
    display: flex;
    align-items: center;
    gap: 9px;
    font-size: 16.800px;
    color: #fff;
    padding-right: 2px;
  }

  .buy-btn {
    width: 100%;
    height: 60px;
    margin-top: 16px;
    background: #12a538;
    border-radius: 18px;
    font-size: 18px;
    font-weight: 500;
  }

  hr {
    height: 1px;
    margin: 22px 0 0;
    border: 0;
    background: #2e2e2e;
  }

  h3 {
    margin: 23px 0 0;
    font-size: 18.500px;
    font-weight: 500;
    line-height: 26px;
  }

  .coin {
    height: 42px;
    margin-top: 12px;
    display: flex;
    align-items: center;
  }

  .coin.usdt {
    margin-top: 23px;
  }

  .coin-name {
    margin-left: 11px;
    font-size: 18.500px;
  }

  .coin-vals {
    margin-left: auto;
    display: flex;
    flex-direction: column;
    align-items: flex-end;
    font-size: 16.500px;
    line-height: 21px;
  }

  .coin-vals small {
    font-size: 16.500px;
    color: #666;
  }

  .kv {
    height: 32px;
    display: flex;
    align-items: center;
    justify-content: space-between;
    font-size: 16.500px;
  }

  .coin + .kv {
    margin-top: 7px;
  }

  .kv span:first-child {
    font-size: 15.500px;
    color: #8a8a8a;
  }

  .actions {
    margin-top: 16px;
    display: grid;
    grid-template-columns: repeat(3, 1fr);
    gap: 16px;
  }

  .actions button {
    height: 44px;
    background: #333;
    border-radius: 14px;
    font-size: 16px;
    font-weight: 500;
  }

  /* open orders */
  .orders {
    grid-column: 1 / span 2;
    grid-row: 2;
  }

  .orders-head {
    height: 62px;
    margin-bottom: -2px;
    padding: 0 27px 0 22px;
    gap: 30px;
  }

  .check {
    width: 21px;
    height: 21px;
    box-sizing: border-box;
    border: 1.500px solid #2f2f2f;
    border-radius: 5px;
    margin-right: -19px;
  }

  .hide-label {
    font-size: 16.200px;
    color: #ddd;
  }

  .more {
    display: flex;
    align-items: center;
    gap: 3px;
    margin-left: 25.500px;
    margin-right: 3.500px;
    font-size: 16px;
    color: #ccc;
  }

  .orders-cols {
    height: 34px;
    padding-left: 16px;
    display: grid;
    grid-template-columns: 137px 136px 122px 96px 231px 231px 230px 137px 83px 95px;
    align-items: center;
    font-size: 16px;
    color: #666;
  }

  .orders-cols button {
    height: 33px;
    background: #4a4a4a;
    border-radius: 14px;
    color: #fff;
    font-size: 15.500px;
  }

  .edge {
    height: 1px;
    margin-top: 1px;
    background: #c8c8c8;
  }

  .markup {
    position: absolute;
    left: 0;
    top: 0;
    pointer-events: none;
  }
</style>
